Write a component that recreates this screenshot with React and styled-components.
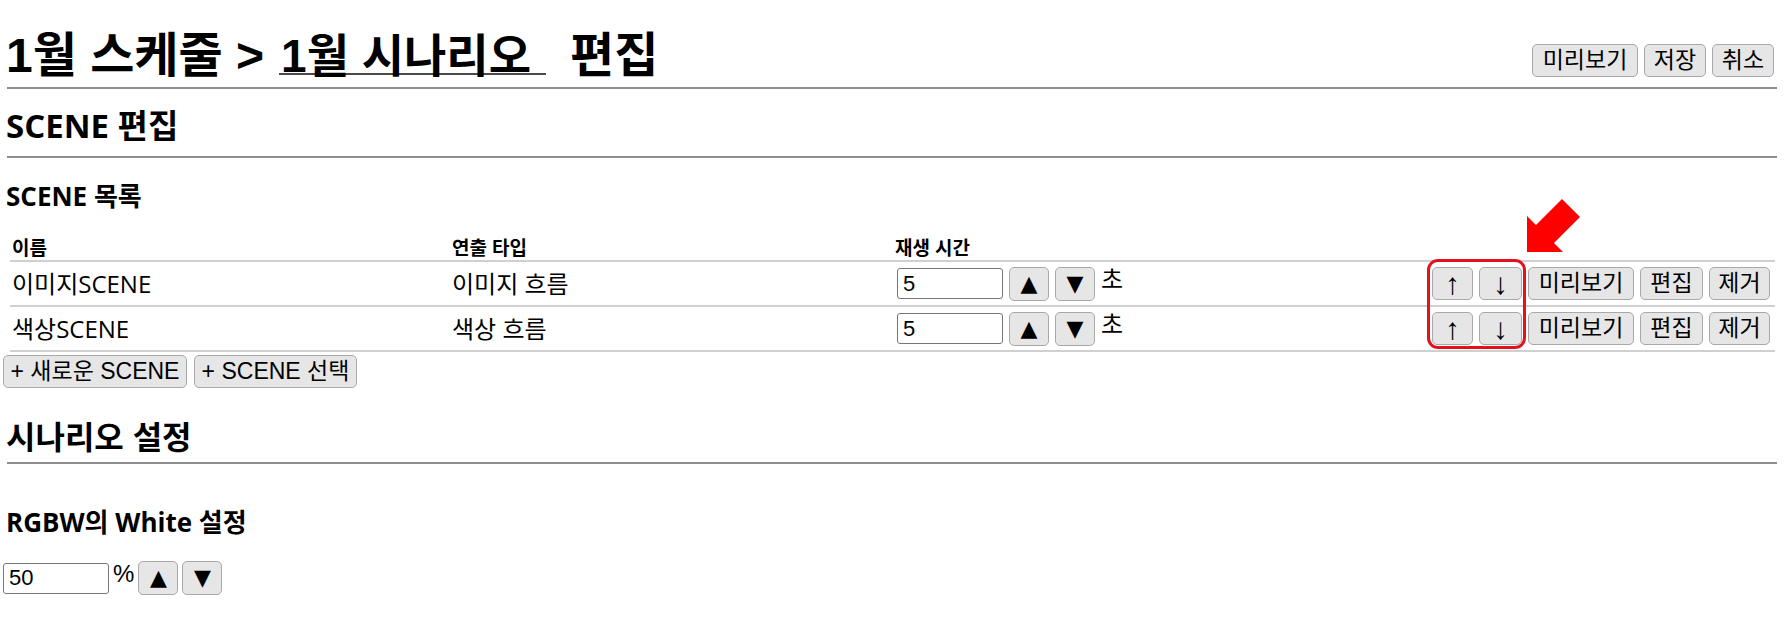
import React from 'react';
import styled, { createGlobalStyle } from 'styled-components';

const KR_SANS = `"Open Sans", "Noto Sans CJK KR", sans-serif`;
const KR_ARIAL = `"Liberation Sans", "Noto Sans CJK KR", sans-serif`;

const GlobalStyle = createGlobalStyle`
  html, body { margin: 0; padding: 0; background: #fff; }
  body { font-family: ${KR_SANS}; color: #000; }
  * { box-sizing: border-box; }
`;

const Page = styled.div`
  position: relative;
  padding: 0 7px 20px 3px;
`;

const Header = styled.header`
  display: flex;
  justify-content: space-between;
  align-items: flex-end;
  padding-top: 29px;
`;

const Title = styled.h1`
  margin: 0 0 0 3px;
  display: flex;
  align-items: flex-end;
  font-family: ${KR_ARIAL};
  font-size: 48px;
  font-weight: 700;
  line-height: 50px;
`;

const TitleText = styled.span`
  white-space: pre;
`;

const TitleField = styled.span`
  display: inline-block;
  width: 267px;
  height: 46px;
  margin: 0 24px 6px 15px;
  padding: 10px 0 0 2px;
  font-size: 46px;
  line-height: 34px;
  white-space: pre;
  border-bottom: 2px solid #4a4a4a;
`;

const ButtonGroup = styled.div`
  display: flex;
  gap: ${p => p.$gap ?? 6}px;
  margin: ${p => p.$margin ?? '0'};
`;

const Button = styled.button`
  flex: none;
  height: ${p => p.$h ?? 33}px;
  width: ${p => (p.$w ? `${p.$w}px` : 'auto')};
  padding: 0 ${p => p.$px ?? 6}px;
  margin: 0;
  font-family: ${p => (p.$glyph ? `"DejaVu Sans", sans-serif` : KR_ARIAL)};
  font-size: ${p => p.$fs ?? 23}px;
  line-height: 1;
  color: #000;
  background: #e6e6e6;
  border: 1px solid #a9a9a9;
  border-radius: 5px;
  display: inline-flex;
  align-items: center;
  justify-content: center;
  white-space: pre;
`;

const Rule = styled.hr`
  height: 0;
  margin: ${p => p.$mt}px 0 0 4px;
  border: none;
  border-top: 2px solid #8e8e8e;
`;

const H2 = styled.h2`
  margin: ${p => p.$mt}px 0 0 3px;
  font-family: ${p => (p.$arial ? KR_ARIAL : KR_SANS)};
  font-size: ${p => (p.$arial ? 32 : 33)}px;
  font-weight: 700;
  line-height: ${p => p.$lh ?? 36}px;
`;

const H3 = styled.h3`
  margin: ${p => p.$mt}px 0 0 3px;
  font-family: ${KR_SANS};
  font-size: 26px;
  font-weight: 700;
  line-height: 30px;
`;

const Table = styled.div`
  margin: ${p => p.$mt}px 2px 0 7px;
`;

const Row = styled.div`
  display: grid;
  grid-template-columns: 440px 443px 1fr auto;
  align-items: center;
  height: ${p => (p.$head ? 26 : 45)}px;
  border-bottom: 2px solid #d0d0d0;
`;

const HeadCell = styled.div`
  padding-left: 2px;
  font-family: ${KR_SANS};
  font-size: 19px;
  font-weight: 700;
  line-height: 24px;
`;

const Cell = styled.div`
  padding-left: 2px;
  font-family: ${KR_SANS};
  font-size: 24px;
  line-height: 30px;
  display: flex;
  align-items: center;
  gap: 6px;
`;

const ActionCell = styled.div`
  display: flex;
  gap: 6px;
  padding-right: 5px;
`;

const NumberInput = styled.input`
  width: 106px;
  height: 31px;
  margin: 0 0 0 ${p => p.$ml ?? 0}px;
  padding: 0 5px;
  font-family: "Liberation Sans", sans-serif;
  font-size: 22px;
  color: #000;
  border: 1px solid #767676;
  border-radius: 3px;
  background: #fff;
`;

const Unit = styled.span`
  font-family: ${KR_ARIAL};
  font-size: 24px;
  line-height: 28px;
  margin-top: -8px;
`;

const AddBar = styled.div`
  display: flex;
  gap: 7px;
  margin-top: 3px;
`;

const ValueRow = styled.div`
  display: flex;
  align-items: center;
  gap: 4px;
  margin-top: ${p => p.$mt}px;
`;

const Highlight = styled.div`
  position: absolute;
  left: 1427px;
  top: 259px;
  width: 99px;
  height: 90px;
  border: 3px solid #e3111b;
  border-radius: 11px;
  pointer-events: none;
`;

const Pointer = styled.svg`
  position: absolute;
  left: 1520px;
  top: 194px;
  width: 65px;
  height: 62px;
  pointer-events: none;
`;

const scenes = [
  { name: '이미지SCENE', type: '이미지 흐름', time: 5 },
  { name: '색상SCENE', type: '색상 흐름', time: 5 },
];

function Stepper() {
  return (
    <>
      <Button $w={40} $h={34} $px={0} $glyph $fs={22}>▲</Button>
      <Button $w={40} $h={34} $px={0} $glyph $fs={22}>▼</Button>
    </>
  );
}

export default function App() {
  return (
    <>
      <GlobalStyle />
      <Page>
        <Header>
          <Title>
            <TitleText>1월 스케줄 &gt;</TitleText>
            <TitleField>1월 시나리오</TitleField>
            <TitleText>편집</TitleText>
          </Title>
          <ButtonGroup $margin="0 3px 4px 0">
            <Button $w={106}>미리보기</Button>
            <Button $w={62}>저장</Button>
            <Button $w={62}>취소</Button>
          </ButtonGroup>
        </Header>
        <Rule $mt={6} />

        <H2 $mt={19}>SCENE 편집</H2>
        <Rule $mt={12} />

        <H3 $mt={23}>SCENE 목록</H3>
        <Table $mt={25}>
          <Row $head>
            <HeadCell>이름</HeadCell>
            <HeadCell>연출 타입</HeadCell>
            <HeadCell>재생 시간</HeadCell>
            <div />
          </Row>
          {scenes.map(s => (
            <Row key={s.name}>
              <Cell>{s.name}</Cell>
              <Cell>{s.type}</Cell>
              <Cell>
                <NumberInput $ml={2} defaultValue={s.time} />
                <Stepper />
                <Unit>초</Unit>
              </Cell>
              <ActionCell>
                <Button $w={41} $fs={30} $px={0}>↑</Button>
                <Button $w={43} $fs={30} $px={0}>↓</Button>
                <Button $w={106}>미리보기</Button>
                <Button $w={63}>편집</Button>
                <Button $w={61}>제거</Button>
              </ActionCell>
            </Row>
          ))}
        </Table>
        <AddBar>
          <Button $w={184}>+ 새로운 SCENE</Button>
          <Button $w={163}>+ SCENE 선택</Button>
        </AddBar>

        <H2 $mt={30} $arial $lh={40}>시나리오 설정</H2>
        <Rule $mt={4} />

        <H3 $mt={43}>RGBW의 White 설정</H3>
        <ValueRow $mt={24}>
          <NumberInput defaultValue={50} />
          <Unit>%</Unit>
          <Stepper />
        </ValueRow>

        <Highlight />
        <Pointer viewBox="0 0 65 62">
          <polygon
            points="7,58 7,22 16,31 42,5 60,23 34,49 43,58"
            fill="#ff0000"
          />
        </Pointer>
      </Page>
    </>
  );
}
